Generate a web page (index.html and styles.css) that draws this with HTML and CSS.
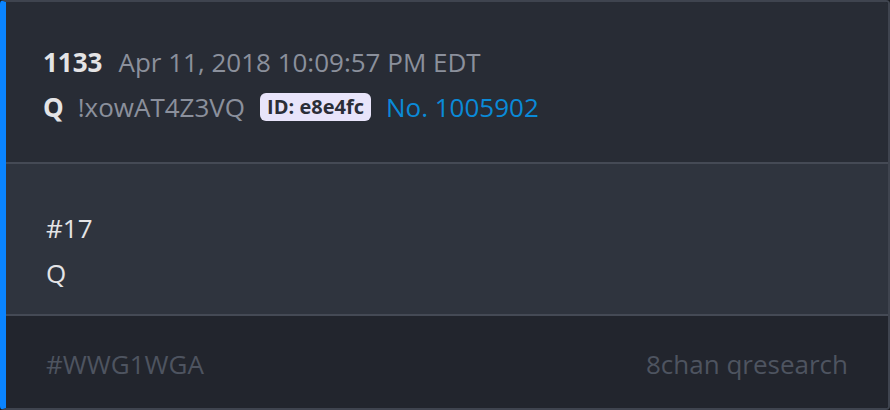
FILE: index.html
```html
<!DOCTYPE html>
<html lang="en">
<head>
  <meta charset="UTF-8" />
  <title>Post 1133</title>
  <link rel="stylesheet" href="styles.css">
</head>
<body>
  <div class="post">
    <div class="post-head">
      <div class="line">
        <span class="num">1133</span>
        <span class="date">Apr 11, 2018 10:09:57 PM EDT</span>
      </div>
      <div class="line line-author">
        <span class="author">Q</span>
        <span class="trip">!xowAT4Z3VQ</span>
        <span class="badge">ID: e8e4fc</span>
        <a class="link" href="#">No. 1005902</a>
      </div>
    </div>
    <div class="post-body">
      <p>#17</p>
      <p>Q</p>
    </div>
    <div class="post-foot">
      <span>#WWG1WGA</span>
      <span>8chan qresearch</span>
    </div>
  </div>
</body>
</html>
```

FILE: styles.css
```css
body {
  margin: 0;
  background: #16181d;
  font-family: "Open Sans", "Noto Sans", sans-serif;
  font-size: 26px;
}
.post {
  width: 890px;
  height: 410px;
  box-sizing: border-box;
  border: 2px solid #3f444f;
  border-left: 6px solid #0a84ff;
  border-radius: 4px;
  overflow: hidden;
  display: flex;
  flex-direction: column;
}
.post-head {
  background: #282c35;
  height: 162px;
  box-sizing: border-box;
  padding: 38px 0 0 37px;
  border-bottom: 2px solid #454a55;
}
.line {
  display: flex;
  align-items: center;
  gap: 16px;
  height: 44px;
}
.line-author {
  gap: 15px;
  margin-top: 1px;
}
.num {
  color: #e4e4e6;
  font-weight: 700;
}
.date, .trip {
  color: #8b909c;
}
.author {
  color: #e4e4e6;
  font-weight: 700;
  margin-right: -1px;
}
.badge {
  background: #e8e4fa;
  color: #2b2e37;
  font-weight: 700;
  font-size: 20px;
  line-height: 28px;
  padding: 0 7px;
  border-radius: 6px;
}
.link {
  color: #0a8ad8;
  text-decoration: none;
}
.post-body {
  background: #2f343e;
  height: 152px;
  box-sizing: border-box;
  padding: 42px 0 0 40px;
  border-bottom: 2px solid #454a55;
  color: #e4e4e6;
}
.post-body p {
  margin: 0;
  height: 45px;
  line-height: 45px;
}
.post-foot {
  flex: 1;
  background: #22252d;
  display: flex;
  justify-content: space-between;
  align-items: center;
  padding: 3px 40px 0;
  color: #4e5460;
}
```
